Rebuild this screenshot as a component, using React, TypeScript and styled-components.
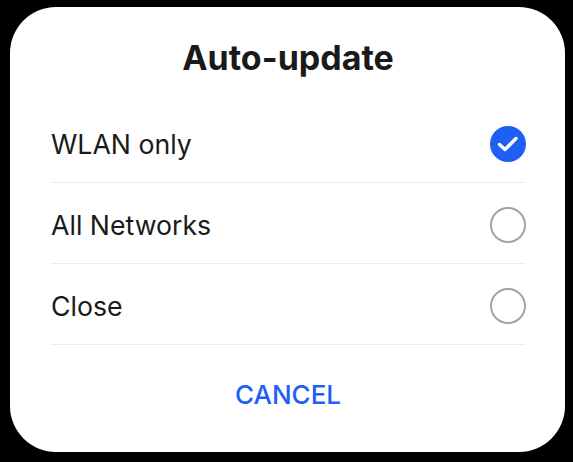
import React, { useState } from "react";
import styled, { createGlobalStyle } from "styled-components";

const Global = createGlobalStyle`
  html, body { margin: 0; padding: 0; background: #000; }
  body { font-family: Inter, "Noto Sans", sans-serif; }
`;

const Page = styled.div`
  width: 573px;
  height: 462px;
  background: #000;
  padding: 7px 8px 10px 10px;
  box-sizing: border-box;
`;

const Card = styled.div`
  width: 555px;
  height: 445px;
  background: #fff;
  border-radius: 46px;
  box-sizing: border-box;
  padding: 0 40px 0 41px;
  display: flex;
  flex-direction: column;
`;

const Title = styled.h1`
  margin: 0;
  height: 95px;
  display: flex;
  align-items: center;
  justify-content: center;
  font-size: 34px;
  font-weight: 700;
  color: #1a1a1a;
  padding-top: 6px;
  box-sizing: border-box;
`;

const List = styled.div`
  display: flex;
  flex-direction: column;
`;

const Row = styled.label`
  height: 81px;
  display: flex;
  align-items: center;
  justify-content: space-between;
  border-bottom: 1px solid #ececec;
  box-sizing: border-box;
  padding-top: 3px;
  cursor: pointer;
`;

const Label = styled.span`
  font-size: 26.7px;
  color: #1a1a1a;
`;

const Radio = styled.span<{ $on: boolean }>`
  width: 36px;
  height: 36px;
  margin-right: -1px;
  border-radius: 50%;
  box-sizing: border-box;
  display: flex;
  align-items: center;
  justify-content: center;
  background: ${(p) => (p.$on ? "#1f5ff5" : "#fff")};
  border: ${(p) => (p.$on ? "none" : "2px solid #a3a3a3")};
`;

const Cancel = styled.button`
  flex: 1;
  border: none;
  background: none;
  color: #1f5ff5;
  font-family: inherit;
  font-size: 26px;
  font-weight: 500;
  padding: 0 0 8px;
  cursor: pointer;
`;

const options = ["WLAN only", "All Networks", "Close"];

export default function App() {
  const [sel, setSel] = useState(0);
  return (
    <>
      <Global />
      <Page>
        <Card>
          <Title>Auto-update</Title>
          <List>
            {options.map((o, i) => (
              <Row key={o} onClick={() => setSel(i)}>
                <Label>{o}</Label>
                <Radio $on={sel === i}>
                  {sel === i && (
                    <svg width="36" height="36" viewBox="0 0 36 36">
                      <path d="M9.5 18.5 L15 23.5 L26 12.5" fill="none" stroke="#fff" strokeWidth="3.4" strokeLinecap="round" strokeLinejoin="round" />
                    </svg>
                  )}
                </Radio>
              </Row>
            ))}
          </List>
          <Cancel>CANCEL</Cancel>
        </Card>
      </Page>
    </>
  );
}
